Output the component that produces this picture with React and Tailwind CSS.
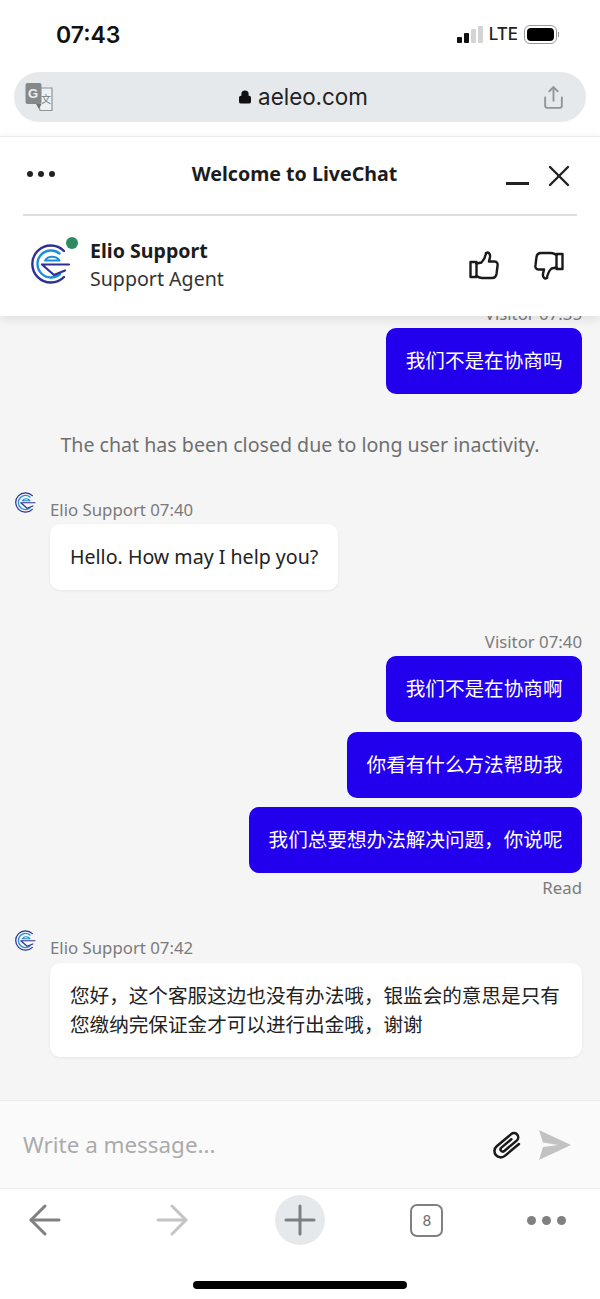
import { Share, ArrowLeft, ArrowRight, Plus, X, Lock } from 'lucide-react';

const CJK = "font-['Noto_Sans','Noto_Sans_CJK_SC',sans-serif]";

function EliLogo({ size = 40 }) {
  return (
    <svg width={size} height={size} viewBox="0 0 40 40" fill="none">
      <path d="M33 7A18.5 18.5 0 1 0 33 33" stroke="#2e3192" strokeWidth="2.4" strokeLinecap="round" />
      <path d="M28.5 9.5A13.5 13.5 0 1 0 29 30" stroke="#1d8fd8" strokeWidth="2.4" strokeLinecap="round" />
      <path d="M11 20.5H38M11 20.5L23 31L34 26.5" stroke="#2e3192" strokeWidth="2.2" strokeLinecap="round" strokeLinejoin="round" />
      <path d="M14 16.5C17 11.5 25 11.5 28.5 16.5H14Z" stroke="#1d8fd8" strokeWidth="2" strokeLinejoin="round" />
    </svg>
  );
}

function TranslateIcon() {
  return (
    <svg width="28" height="30" viewBox="0 0 28 30">
      <path d="M11 6H27V28.5H15L11 6Z" fill="#eef0f1" stroke="#8f9497" strokeWidth="1.2" />
      <rect x="0.5" y="1" width="16" height="21" rx="2" fill="#85898b" />
      <path d="M11 22L16.5 22L14 27Z" fill="#6f7375" />
      <text x="3" y="16" fontSize="13" fontWeight="700" fill="#eceeef" fontFamily="Liberation Sans, sans-serif">G</text>
      <text x="16" y="21" fontSize="10" fill="#777b7d" fontFamily="Noto Sans CJK SC, sans-serif">文</text>
    </svg>
  );
}

function ThumbIcon({ className }) {
  return (
    <svg width="30" height="29" viewBox="0 0 30 29" fill="none" stroke="#1a1a1a" strokeWidth="2.4" strokeLinejoin="round" strokeLinecap="round" className={className}>
      <rect x="1.5" y="11" width="6" height="15" />
      <path d="M7.5 12.5L12.5 11.5C15 9 16.5 6 17 2C19.5 0.5 21.5 3 21 6L20 10.5H25.5C28 10.5 29 12.5 28.5 15L27.5 23C27 26 25.5 27 23 27H13C11 27 9 26 7.5 25" />
    </svg>
  );
}

function ClipIcon() {
  return (
    <svg width="36" height="36" viewBox="0 0 40 40" fill="none">
      <g transform="rotate(-40 20 20)">
        <path d="M30 27H9.5A7 7 0 0 1 9.5 13H30.5A4.5 4.5 0 0 1 30.5 22.5H12.5A2.5 2.5 0 0 1 12.5 17.5H27" stroke="#1a1a1a" strokeWidth="2.8" strokeLinecap="round" />
      </g>
    </svg>
  );
}

function SendIcon() {
  return (
    <svg width="34" height="32" viewBox="0 0 34 32">
      <path d="M1 1L33 16L1 31L5 18L20 16L5 13.5Z" fill="#c2c2c2" />
    </svg>
  );
}

function StatusBar() {
  return (
    <div className="flex h-[72px] items-start justify-between pl-[56px] pr-[41px] pt-[20px]">
      <span className="font-['Inter',sans-serif] text-[23px] leading-[30px] font-semibold text-[#111]">07:43</span>
      <div className="flex items-center gap-[6px] pt-[4px]">
        <div className="flex items-end gap-[2px]">
          <span className="h-[6px] w-[5px] rounded-[1px] bg-[#111]" />
          <span className="h-[10px] w-[5px] rounded-[1px] bg-[#111]" />
          <span className="h-[14px] w-[5px] rounded-[1px] bg-[#d4d4d4]" />
          <span className="h-[17px] w-[5px] rounded-[1px] bg-[#d4d4d4]" />
        </div>
        <span className="font-['Inter',sans-serif] text-[17px] leading-[20px] font-medium text-[#222]">LTE</span>
        <div className="flex items-center">
          <div className="flex h-[19px] w-[33px] items-center rounded-[6px] border border-[#999] p-[2px]">
            <div className="h-full w-full rounded-[4px] bg-black" />
          </div>
          <span className="ml-[1px] h-[5px] w-[1px] bg-[#999]" />
        </div>
      </div>
    </div>
  );
}

function AddressBar() {
  return (
    <div className="px-[14px]">
      <div className="flex h-[50px] items-center justify-between rounded-full bg-[#e6e9eb] pl-[11px] pr-[20px]">
        <TranslateIcon />
        <div className="ml-[12px] flex items-center gap-[6px]">
          <Lock size={14} fill="#111" className="text-[#111]" strokeWidth={2.5} />
          <span className="font-['Inter',sans-serif] text-[22.4px] leading-[30px] text-[#222]">aeleo.com</span>
        </div>
        <Share size={25} strokeWidth={1.8} className="text-[#8f9497]" />
      </div>
    </div>
  );
}

function ChatHeader() {
  return (
    <div className="relative z-10 mt-[14px] border-t border-[#ececec] bg-white shadow-[0_3px_10px_rgba(0,0,0,0.10)]">
      <div className="mx-[23px] flex h-[79px] items-center justify-between border-b-2 border-[#dedede] pb-[4px]">
        <div className="flex gap-[5px] pl-[4px]">
          <span className="h-[6px] w-[6px] rounded-full bg-[#222]" />
          <span className="h-[6px] w-[6px] rounded-full bg-[#222]" />
          <span className="h-[6px] w-[6px] rounded-full bg-[#222]" />
        </div>
        <span className="ml-[28px] text-[19.6px] leading-[28px] font-bold text-[#1c1c1c]">Welcome to LiveChat</span>
        <div className="flex items-center gap-[12px]">
          <span className="mt-[20px] h-[2.5px] w-[23px] bg-[#222]" />
          <X size={36} strokeWidth={1.6} className="mt-[4px] text-[#222]" />
        </div>
      </div>
      <div className="flex h-[100px] items-center justify-between pb-[2px] pl-[29px] pr-[36px]">
        <div className="flex items-center gap-[15px]">
          <div className="relative mt-[4px] h-[46px] w-[46px] pl-[2px]">
            <EliLogo size={40} />
            <span className="absolute right-[-3px] top-[-7px] h-[12px] w-[12px] rounded-full bg-[#2e8b5f]" />
          </div>
          <div className="flex flex-col">
            <span className="text-[19.6px] leading-[28px] font-bold text-[#1c1c1c]">Elio Support</span>
            <span className="text-[19.6px] leading-[28px] text-[#333]">Support Agent</span>
          </div>
        </div>
        <div className="flex items-center gap-[35px]">
          <ThumbIcon />
          <ThumbIcon className="rotate-180" />
        </div>
      </div>
    </div>
  );
}

function UserBubble({ children }) {
  return (
    <div className="flex h-[66px] items-center rounded-[10px] bg-[#2200ee] px-[19.5px] text-[19.6px] text-white">
      {children}
    </div>
  );
}

function AgentLabel({ time }) {
  return (
    <div className="flex items-start">
      <div className="ml-[15px] mt-[-6px] h-[22px] w-[22px]">
        <EliLogo size={21} />
      </div>
      <span className="ml-[13px] text-[16.8px] leading-[24px] text-[#7b7b7b]">Elio Support {time}</span>
    </div>
  );
}

function Messages() {
  return (
    <div className={`flex min-h-0 flex-1 flex-col justify-end overflow-hidden bg-[#f5f5f5] pb-[43px] ${CJK}`}>
      <div className="flex flex-col items-end pr-[18px]">
        <span className="text-[16.8px] leading-[24px] text-[#7b7b7b]">Visitor 07:35</span>
        <div className="mt-[2px]">
          <UserBubble>我们不是在协商吗</UserBubble>
        </div>
      </div>

      <p className="mt-[38px] text-center text-[19.6px] leading-[26px] text-[#6f6f6f]">The chat has been closed due to long user inactivity.</p>

      <div className="mt-[40px]">
        <AgentLabel time="07:40" />
        <div className="ml-[50px] mt-[2px] flex h-[66px] w-[288px] items-center whitespace-nowrap rounded-[10px] bg-white px-[20px] text-[19.6px] text-[#222] shadow-[0_1px_3px_rgba(0,0,0,0.06)]">
          Hello. How may I help you?
        </div>
      </div>

      <div className="mt-[40px] flex flex-col items-end pr-[18px]">
        <span className="text-[16.8px] leading-[24px] text-[#7b7b7b]">Visitor 07:40</span>
        <div className="mt-[2px] flex flex-col items-end gap-[9.5px]">
          <UserBubble>我们不是在协商啊</UserBubble>
          <UserBubble>你看有什么方法帮助我</UserBubble>
          <UserBubble>我们总要想办法解决问题，你说呢</UserBubble>
        </div>
        <span className="mt-[3px] text-[16.8px] leading-[24px] text-[#7b7b7b]">Read</span>
      </div>

      <div className="mt-[36px]">
        <AgentLabel time="07:42" />
        <div className="ml-[50px] mr-[18px] mt-[3px] rounded-[10px] bg-white px-[20px] py-[18px] text-[19.6px] leading-[29px] text-[#222] shadow-[0_1px_3px_rgba(0,0,0,0.06)]">
          您好，这个客服这边也没有办法哦，银监会的意思是只有您缴纳完保证金才可以进行出金哦，谢谢
        </div>
      </div>
    </div>
  );
}

function Composer() {
  return (
    <div className="flex h-[89px] items-center justify-between border-y border-[#ececec] bg-[#fafafa] pl-[23px] pr-[28px]">
      <span className="font-['Noto_Sans',sans-serif] text-[22.4px] text-[#ababab]">Write a message...</span>
      <div className="flex items-center gap-[12px]">
        <ClipIcon />
        <SendIcon />
      </div>
    </div>
  );
}

function ToolbarSlot({ children, className = '' }) {
  return <div className={`flex w-[60px] items-center justify-center ${className}`}>{children}</div>;
}

function Toolbar() {
  return (
    <div className="flex h-[110px] flex-col bg-white">
      <div className="flex h-[62px] items-center gap-[67.3px] pl-[15px]">
        <ToolbarSlot>
          <ArrowLeft size={48} strokeWidth={1.5} className="text-[#808080]" />
        </ToolbarSlot>
        <ToolbarSlot>
          <ArrowRight size={48} strokeWidth={1.5} className="text-[#c4c4c4]" />
        </ToolbarSlot>
        <ToolbarSlot>
          <div className="flex h-[50px] w-[50px] items-center justify-center rounded-full bg-[#e6e9eb]">
            <Plus size={48} strokeWidth={1.5} className="shrink-0 text-[#7c7f81]" />
          </div>
        </ToolbarSlot>
        <ToolbarSlot>
          <div className="flex h-[33px] w-[33px] items-center justify-center rounded-[7px] border-[2.5px] border-[#808080] font-['Inter',sans-serif] text-[14px] font-medium text-[#777]">8</div>
        </ToolbarSlot>
        <ToolbarSlot className="ml-[-8px]">
          <div className="flex gap-[6px]">
            <span className="h-[9px] w-[9px] rounded-full bg-[#808080]" />
            <span className="h-[9px] w-[9px] rounded-full bg-[#808080]" />
            <span className="h-[9px] w-[9px] rounded-full bg-[#808080]" />
          </div>
        </ToolbarSlot>
      </div>
      <div className="mt-[30px] flex justify-center">
        <span className="h-[8px] w-[214px] rounded-full bg-black" />
      </div>
    </div>
  );
}

export default function App() {
  return (
    <div className="flex h-[1299px] w-[600px] flex-col overflow-hidden bg-white font-['Noto_Sans',sans-serif]">
      <StatusBar />
      <AddressBar />
      <ChatHeader />
      <Messages />
      <Composer />
      <Toolbar />
    </div>
  );
}
